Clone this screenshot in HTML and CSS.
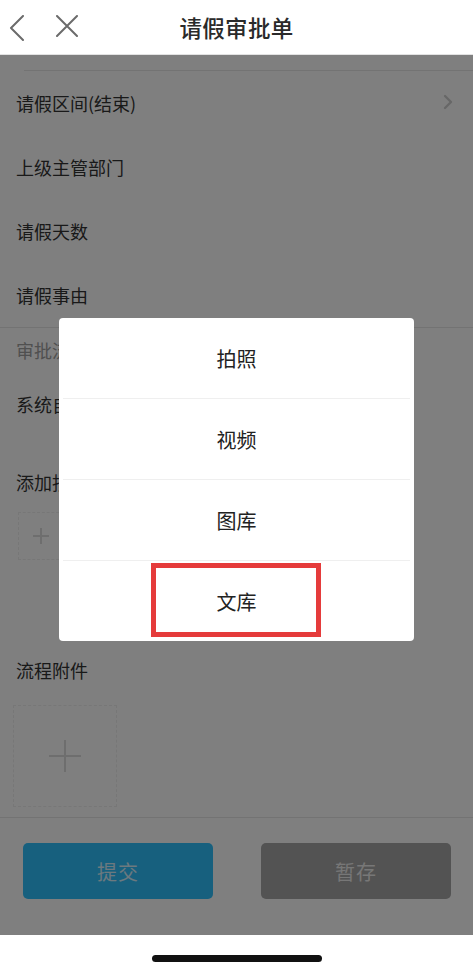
FILE: index.html
```html
<!DOCTYPE html>
<html lang="zh-CN">
<head>
<meta charset="utf-8">
<title>请假审批单</title>
<link rel="stylesheet" href="styles.css">
</head>
<body>
<div class="phone">
  <header class="header">
    <div class="nav-left">
      <svg class="icon-back" width="16" height="26" viewBox="0 0 16 26"><polyline points="14,1 2,13 14,25" fill="none" stroke="#6b6b6b" stroke-width="2" stroke-linecap="round" stroke-linejoin="round"/></svg>
      <svg class="icon-close" width="22" height="22" viewBox="0 0 22 22"><path d="M1 1 L21 21 M21 1 L1 21" fill="none" stroke="#6b6b6b" stroke-width="2" stroke-linecap="round"/></svg>
    </div>
    <h1 class="title">请假审批单</h1>
    <div class="nav-right"></div>
  </header>

  <main class="content">
    <div class="form">
      <div class="prev-row"></div>
      <div class="row">
        <span>请假区间(结束)</span>
        <svg class="chev" width="10" height="16" viewBox="0 0 10 16"><polyline points="2,2 8,8 2,14" fill="none" stroke="#cfcfcf" stroke-width="2.4" stroke-linecap="round" stroke-linejoin="round"/></svg>
      </div>
      <div class="row">上级主管部门</div>
      <div class="row">请假天数</div>
      <div class="row">请假事由</div>
      <div class="section-title">审批流程</div>
      <div class="row">系统自动审批</div>
      <div class="add-block">
        <div class="label">添加抄送人</div>
        <div class="add-box small"><span class="plus"></span></div>
      </div>
      <div class="attach-block">
        <div class="label">流程附件</div>
        <div class="add-box big"><span class="plus"></span></div>
      </div>
      <div class="bottom-bar">
        <button class="btn btn-submit">提交</button>
        <button class="btn btn-save">暂存</button>
      </div>
    </div>

    <div class="overlay">
      <div class="sheet">
        <div class="sheet-item">拍照</div>
        <div class="sheet-item">视频</div>
        <div class="sheet-item">图库</div>
        <div class="sheet-item last">文库<span class="highlight"></span></div>
      </div>
    </div>
  </main>

  <footer class="home-area">
    <div class="home-indicator"></div>
  </footer>
</div>
</body>
</html>
```
FILE: styles.css
```css
* { box-sizing: border-box; }
html, body {
  margin: 0;
  padding: 0;
  background: #fff;
}
body {
  font-family: "Noto Sans CJK SC", "Noto Sans", sans-serif;
  color: #333;
}
.phone {
  width: 473px;
  height: 967px;
  display: flex;
  flex-direction: column;
  overflow: hidden;
}

/* header */
.header {
  height: 55px;
  flex: none;
  display: grid;
  grid-template-columns: 1fr auto 1fr;
  align-items: center;
  background: #fff;
  border-bottom: 1px solid #e2e2e2;
}
.nav-left {
  display: flex;
  align-items: center;
  padding-left: 9px;
  gap: 31px;
}
.icon-back { display: block; margin-top: 1px; }
.icon-close { display: block; margin-top: -2px; }
.title {
  margin: 0;
  font-size: 22.5px;
  font-weight: 500;
  color: #2a2a2a;
  letter-spacing: 0.3px;
  line-height: 54px;
}

/* content */
.content {
  position: relative;
  height: 880px;
  flex: none;
  background: #fff;
}
.form {
  display: flex;
  flex-direction: column;
  height: 100%;
}
.prev-row {
  height: 16px;
  margin-left: 24px;
  border-bottom: 1px solid #e6e6e6;
}
.row {
  height: 64px;
  flex: none;
  display: flex;
  align-items: center;
  justify-content: space-between;
  padding: 0 20px 0 16px;
  font-size: 18px;
  color: #333;
}
.chev { display: block; margin-top: -2px; }
.section-title {
  height: 45px;
  flex: none;
  display: flex;
  align-items: center;
  padding-left: 16px;
  font-size: 18px;
  color: #a0a0a0;
  border-top: 1px solid #e6e6e6;
}
.label {
  font-size: 18px;
  line-height: 24px;
  color: #333;
}
.add-block {
  height: 214px;
  flex: none;
  padding: 34px 16px 0;
}
.add-block .label { margin-bottom: 18px; }
.attach-block {
  height: 168px;
  flex: none;
  padding: 8px 16px 0 13px;
  border-bottom: 1px solid #e6e6e6;
}
.attach-block .label { padding-left: 3px; margin-bottom: 23px; }
.add-box {
  position: relative;
  border: 1px dashed #eeeeee;
  display: flex;
  align-items: center;
  justify-content: center;
}
.add-box.small { width: 46px; height: 48px; margin-left: 2px; }
.add-box.big { width: 104px; height: 102px; }
.plus {
  position: relative;
  width: 32px;
  height: 32px;
  display: block;
}
.add-box.small .plus { width: 16px; height: 16px; }
.plus::before, .plus::after {
  content: "";
  position: absolute;
  background: #dcdcdc;
}
.plus::before { left: 0; right: 0; top: 50%; height: 2px; margin-top: -1px; }
.plus::after { top: 0; bottom: 0; left: 50%; width: 2px; margin-left: -1px; }

.bottom-bar {
  flex: 1;
  display: flex;
  justify-content: space-between;
  align-items: flex-start;
  padding: 25px 22px 0 23px;
}
.btn {
  width: 190px;
  height: 56px;
  border: none;
  border-radius: 5px;
  font-family: inherit;
  font-size: 20px;
  color: rgba(255, 255, 255, 0.82);
  letter-spacing: 1px;
}
.btn-submit { background: #2fc1fd; }
.btn-save { background: #a6a6a6; }

/* overlay + action sheet */
.overlay {
  position: absolute;
  inset: 0;
  background: rgba(0, 0, 0, 0.5);
  display: flex;
  justify-content: center;
  align-items: flex-start;
  padding-top: 263px;
}
.sheet {
  width: 355px;
  background: #fff;
  border-radius: 4px;
  display: flex;
  flex-direction: column;
}
.sheet-item {
  position: relative;
  height: 81px;
  margin: 0 4px;
  display: flex;
  align-items: center;
  justify-content: center;
  font-size: 20px;
  color: #222;
  border-bottom: 1px solid #efefef;
}
.sheet-item.last { height: 80px; border-bottom: none; }
.highlight {
  position: absolute;
  left: 88px;
  top: 2px;
  width: 170px;
  height: 74px;
  border: 5px solid #e53b3b;
}

/* home indicator */
.home-area {
  flex: 1;
  background: #fff;
  display: flex;
  justify-content: center;
  padding-top: 20px;
}
.home-indicator {
  width: 170px;
  height: 7px;
  border-radius: 4px;
  background: #111;
}
```
